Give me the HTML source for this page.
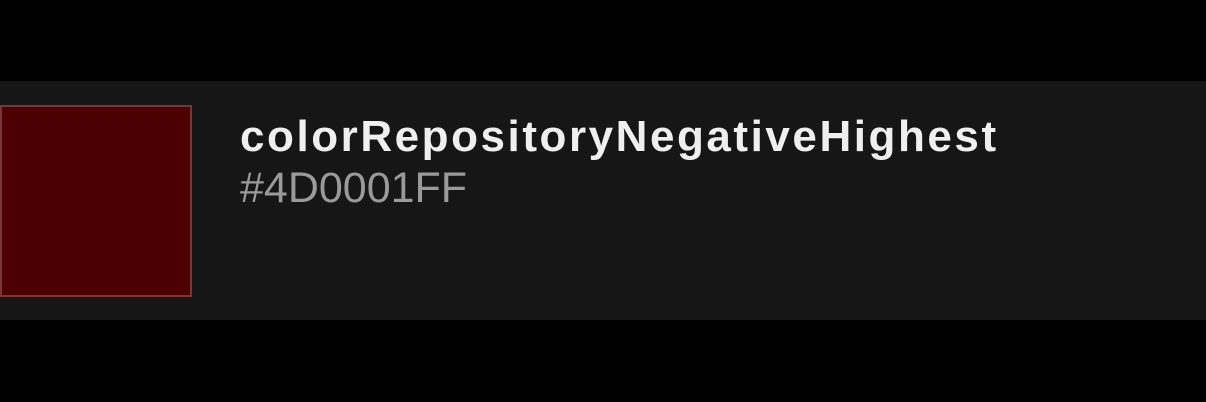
<!DOCTYPE html>
<html><head><style>
html,body{margin:0;padding:0;background:#000;width:1206px;height:402px;overflow:hidden;}
.panel{position:absolute;left:0;top:81px;width:1206px;height:239px;background:#161616;}
.sw{position:absolute;left:0;top:24px;width:188px;height:188px;background:#4d0001;border:2px solid #7a3535;}
.t{position:absolute;left:240px;top:30px;font:bold 44px "Liberation Sans",sans-serif;color:#efefef;white-space:nowrap;line-height:52px;letter-spacing:2.55px;}
.s{position:absolute;left:240px;top:81px;font:43px "Liberation Sans",sans-serif;color:#9a9a9a;white-space:nowrap;line-height:52px;}
</style></head><body>
<div class="panel"><div class="sw"></div>
<div class="t">colorRepositoryNegativeHighest</div>
<div class="s">#4D0001FF</div></div>
</body></html>
